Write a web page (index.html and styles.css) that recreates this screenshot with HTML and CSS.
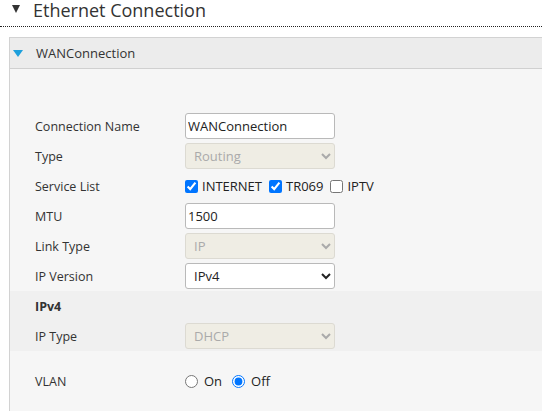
FILE: index.html
```html
<!DOCTYPE html>
<html>
<head>
<meta charset="utf-8">
<link rel="stylesheet" href="styles.css">
</head>
<body>
<div class="section-title"><span class="tri"></span><span class="title-text">Ethernet Connection</span></div>
<div class="panel">
  <div class="panel-head"><span class="tri-blue"></span><span>WANConnection</span></div>
  <div class="panel-body">
    <div class="row"><label class="lbl">Connection Name</label><input class="ctl" type="text" value="WANConnection"></div>
    <div class="row"><label class="lbl">Type</label><select class="ctl sel" disabled><option>Routing</option></select></div>
    <div class="row"><label class="lbl">Service List</label>
      <div class="checks">
        <label class="chk"><input type="checkbox" checked>INTERNET</label>
        <label class="chk"><input type="checkbox" checked>TR069</label>
        <label class="chk"><input type="checkbox">IPTV</label>
      </div>
    </div>
    <div class="row"><label class="lbl">MTU</label><input class="ctl" type="text" value="1500"></div>
    <div class="row"><label class="lbl">Link Type</label><select class="ctl sel" disabled><option>IP</option></select></div>
    <div class="row"><label class="lbl">IP Version</label><select class="ctl sel active"><option>IPv4</option></select></div>
    <div class="sub">
      <div class="row"><span class="lbl bold">IPv4</span></div>
      <div class="row"><label class="lbl">IP Type</label><select class="ctl sel" disabled><option>DHCP</option></select></div>
    </div>
    <div class="row vlan"><label class="lbl">VLAN</label>
      <div class="radios">
        <label class="rad"><input type="radio" name="vlan">On</label>
        <label class="rad"><input type="radio" name="vlan" checked>Off</label>
      </div>
    </div>
  </div>
</div>
</body>
</html>
```
FILE: styles.css
```css
html, body { margin: 0; padding: 0; background: #fff; height: 411px; overflow: hidden; }
body { font-family: "Open Sans", "Noto Sans", sans-serif; color: #333; }

.section-title {
  height: 27px;
  box-sizing: border-box;
  display: flex;
  align-items: flex-start;
  border-bottom: 1px dotted #222;
  font-size: 18px;
  color: #333;
  padding-left: 12px;
}
.tri {
  width: 0; height: 0;
  border-left: 4.5px solid transparent;
  border-right: 4.5px solid transparent;
  border-top: 8px solid #333;
  margin-top: 5px;
  margin-right: 13px;
}
.title-text { line-height: 20px; margin-top: 0; }

.panel {
  margin-top: 10px;
  margin-left: 9px;
  border: 1px solid #d2d2d2;
  border-right: none;
  border-bottom: none;
  height: 373px;
  overflow: hidden;
}
.panel-head {
  height: 30px;
  background: #ececec;
  border-bottom: 1px solid #d0d0d0;
  display: flex;
  align-items: center;
  font-size: 13px;
  color: #333;
}
.tri-blue {
  width: 0; height: 0;
  border-left: 5px solid transparent;
  border-right: 5px solid transparent;
  border-top: 7px solid #1ea0dc;
  margin-left: 3px;
  margin-right: 13px;
  margin-top: 1px;
}
.panel-body {
  background: #f6f6f6;
  padding-top: 42px;
  height: 400px;
}
.row {
  height: 30px;
  display: flex;
  align-items: center;
  padding-left: 25px;
}
.lbl { width: 150px; font-size: 12.5px; color: #333; }
.bold { font-weight: bold; }
.ctl {
  box-sizing: border-box;
  width: 150px;
  height: 26px;
  margin: 0;
  border: 1px solid #b9b9b9;
  border-radius: 3px;
  background: #fff;
  font-family: inherit;
  font-size: 13px;
  color: #222;
  padding: 0 2px;
}
.sel { padding: 0 4px; }
.sel:disabled { background-color: #efede4; border-color: #dcdad2; color: #aaa; opacity: 1; }
.checks, .radios { display: flex; align-items: center; font-size: 13px; color: #222; }
.chk { display: flex; align-items: center; margin-right: 7px; }
.chk input { margin: 0 4px 0 0; width: 13px; height: 13px; }
.rad { display: flex; align-items: center; margin-right: 10px; }
.rad input { margin: 0 6px 0 0; width: 13px; height: 13px; }
.sub { background: #f0f0f0; }
.vlan { margin-top: 15px; }
```
